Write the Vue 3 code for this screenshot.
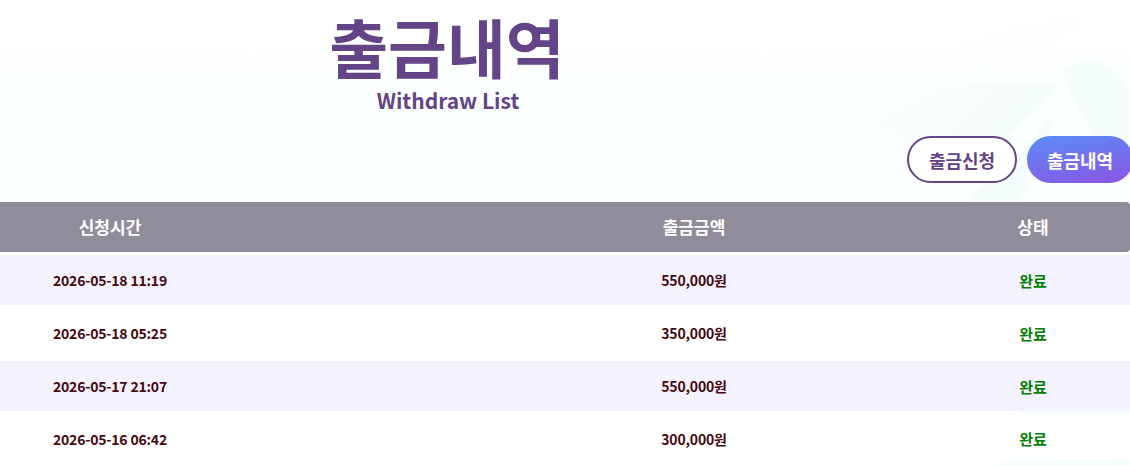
<template>
  <div class="page">
    <svg class="bg" viewBox="0 0 1130 466" preserveAspectRatio="none" aria-hidden="true">
      <defs>
        <linearGradient id="wash" x1="0" y1="0" x2="0" y2="1">
          <stop offset="0" stop-color="#ffffff" />
          <stop offset="0.15" stop-color="#ffffff" />
          <stop offset="0.43" stop-color="#fcffff" />
        </linearGradient>
        <linearGradient id="leafFade" x1="0" y1="0" x2="1" y2="0.4">
          <stop offset="0" stop-color="#fcfefe" />
          <stop offset="1" stop-color="#f3fcfc" />
        </linearGradient>
        <filter id="soft" x="-10%" y="-10%" width="120%" height="120%"><feGaussianBlur stdDeviation="2" /></filter>
      </defs>
      <rect x="0" y="0" width="1130" height="200" fill="url(#wash)" />
      <g filter="url(#soft)">
        <path d="M870 122 C925 84 1000 72 1058 86 C1040 112 1000 145 960 172 C930 155 900 138 870 122Z" fill="url(#leafFade)" />
        <path d="M1062 70 C1090 52 1118 62 1130 92 L1130 150 L1100 150 C1085 120 1070 95 1062 70Z" fill="#f5fcfc" />
        <path d="M1055 110 C1040 135 1005 170 965 200 L1020 200 C1040 170 1050 140 1055 110Z" fill="#f4fcfc" />
        <path d="M960 50 C1000 30 1040 22 1085 20 C1050 45 1010 60 975 70Z" fill="#fcfefe" />
        <path d="M1020 409 L1130 406 L1130 414 L1020 414Z" fill="#f1fcfa" />
        <path d="M1000 463 L1130 461 L1130 466 L1000 466Z" fill="#effcfa" />
      </g>
    </svg>

    <header class="heading">
      <h1 class="title">출금내역</h1>
      <p class="subtitle">Withdraw List</p>
    </header>

    <nav class="tabs">
      <a class="tab outline">출금신청</a>
      <a class="tab filled">출금내역</a>
    </nav>

    <section class="table">
      <div class="row head">
        <span class="when">신청시간</span>
        <span>출금금액</span>
        <span>상태</span>
      </div>
      <div v-for="(r, i) in rows" :key="i" class="row body" :class="{ odd: i % 2 === 0 }" :style="{ height: r.h + 'px' }">
        <span class="when">{{ r.time }}</span>
        <span>{{ r.amount }}</span>
        <span class="done">완료</span>
      </div>
    </section>
  </div>
</template>

<script setup>
const rows = [
  { time: '2026-05-18 11:19', amount: '550,000원', h: 50 },
  { time: '2026-05-18 05:25', amount: '350,000원', h: 56 },
  { time: '2026-05-17 21:07', amount: '550,000원', h: 50 },
  { time: '2026-05-16 06:42', amount: '300,000원', h: 55 },
]
</script>

<style>
html, body { margin: 0; background: #fff; overflow: hidden; }
</style>

<style scoped>
.page {
  position: relative;
  width: 1130px;
  height: 466px;
  overflow: hidden;
  font-family: "Noto Sans CJK KR", "Noto Sans", sans-serif;
}
.bg { position: absolute; inset: 0; width: 100%; height: 100%; }
.heading, .tabs, .table { position: relative; }
.heading {
  width: 896px;
  height: 136px;
  text-align: center;
}
.title {
  margin: 0;
  padding: 10px 2px 0 0;
  font-size: 64px;
  line-height: 70px;
  font-weight: 700;
  color: #624487;
}
.subtitle {
  margin: 0;
  padding-top: 7px;
  font-size: 21px;
  line-height: 26px;
  font-weight: 700;
  color: #624487;
}
.tabs {
  display: flex;
  justify-content: flex-end;
  gap: 10px;
  height: 47px;
  margin-bottom: 19px;
}
.tab {
  box-sizing: border-box;
  width: 110px;
  height: 47px;
  border-radius: 24px;
  display: flex;
  align-items: center;
  justify-content: center;
  font-size: 18px;
  font-weight: 700;
}
.tab.outline { border: 2px solid #624487; color: #624487; background: #fff; }
.tab.filled { flex: none; width: 106px; margin-right: -3px; color: #fff; background: linear-gradient(170deg, #5a8cf6, #8a55e2); }
.table { display: flex; flex-direction: column; }
.row {
  display: grid;
  grid-template-columns: 452px 484px 194px;
  align-items: center;
  text-align: center;
  font-weight: 700;
}
.when { padding-right: 232px; }
.head {
  box-sizing: border-box;
  height: 50px;
  padding-bottom: 1px;
  margin-bottom: 3px;
  background: #918c9b;
  border-radius: 0 4px 4px 0;
  color: #fff;
  font-size: 17px;
}
.body { font-size: 14px; letter-spacing: -0.2px; color: #45080f; }
.odd { background: #f4f2fc; }
.done { color: #008000; font-size: 15px; letter-spacing: 0; }
</style>
